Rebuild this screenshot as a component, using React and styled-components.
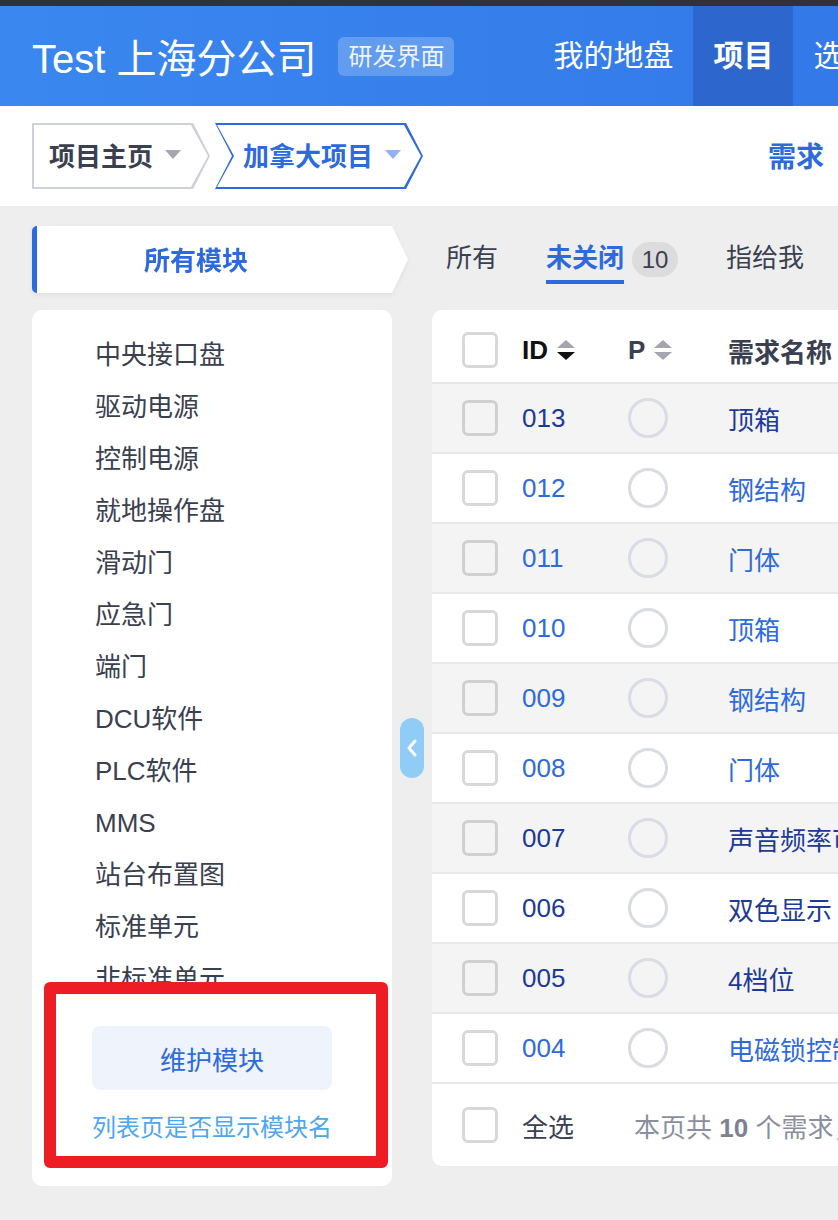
import React from 'react';
import styled, { createGlobalStyle } from 'styled-components';

const FONT = `"Liberation Sans", "Noto Sans CJK SC", sans-serif`;
const BLUE = '#2d6ade';
const NAVY = '#1c3a96';
const TEXT = '#3a4050';

const GlobalStyle = createGlobalStyle`
  html, body { margin: 0; padding: 0; background: #eeeeee; overflow: hidden; }
  body { font-family: ${FONT}; color: ${TEXT}; }
  * { box-sizing: border-box; }
`;

const Page = styled.div`
  width: 1100px;
  min-height: 1220px;
  background: #eeeeee;
`;

const TopStrip = styled.div`
  height: 6px;
  background: #2f3236;
`;

const Header = styled.header`
  height: 100px;
  display: flex;
  align-items: center;
  padding-left: 32px;
  background: linear-gradient(90deg, #3a87ef 0%, #3175e5 100%);
`;

const Brand = styled.div`
  font-size: 40px;
  color: #fff;
  white-space: nowrap;
  flex-shrink: 0;
`;

const EnvBadge = styled.span`
  margin-left: 22px;
  height: 39px;
  line-height: 39px;
  padding: 0 10px;
  border-radius: 6px;
  background: rgba(255, 255, 255, 0.22);
  color: rgba(255, 255, 255, 0.92);
  font-size: 24px;
  flex-shrink: 0;
`;

const MainNav = styled.nav`
  margin-left: 79px;
  display: flex;
  height: 100px;
  flex-shrink: 0;
`;

const NavItem = styled.a`
  padding: 0 20px;
  line-height: 100px;
  font-size: 30px;
  color: #fff;
  white-space: nowrap;
  font-weight: ${(p) => (p.$active ? 700 : 400)};
  background: ${(p) => (p.$active ? '#2d67ce' : 'transparent')};
`;

const SubBar = styled.div`
  height: 100px;
  background: #fff;
  display: flex;
  align-items: center;
  padding-left: 32px;
`;

const crumbShape = (notch) =>
  notch
    ? 'polygon(0 0, calc(100% - 17px) 0, 100% 50%, calc(100% - 17px) 100%, 0 100%, 17px 50%)'
    : 'polygon(0 0, calc(100% - 17px) 0, 100% 50%, calc(100% - 17px) 100%, 0 100%)';

const Crumb = styled.div`
  flex-shrink: 0;
  width: ${(p) => p.$width}px;
  height: 66px;
  padding: 2px;
  margin-left: ${(p) => (p.$notch ? 5 : 0)}px;
  background: ${(p) => (p.$active ? BLUE : '#cdd0d8')};
  clip-path: ${(p) => crumbShape(p.$notch)};
`;

const CrumbInner = styled.div`
  height: 100%;
  background: #fff;
  clip-path: ${(p) => crumbShape(p.$notch)};
  display: flex;
  align-items: center;
  padding-left: ${(p) => (p.$notch ? 26 : 15)}px;
  padding-bottom: 3px;
  font-size: 26px;
  font-weight: 700;
  color: ${(p) => (p.$active ? BLUE : TEXT)};
  white-space: nowrap;
`;

const Caret = styled.span`
  margin-left: 12px;
  width: 0;
  height: 0;
  border-left: 8px solid transparent;
  border-right: 8px solid transparent;
  border-top: 9px solid ${(p) => (p.$active ? '#93b2ee' : '#a4a7b0')};
`;

const SubNavItem = styled.a`
  margin-left: 345px;
  font-size: 28px;
  font-weight: 700;
  color: ${BLUE};
  white-space: nowrap;
  padding-bottom: 3px;
`;

const Main = styled.main`
  padding: 20px 0 0 32px;
`;

const TopRow = styled.div`
  display: flex;
  height: 67px;
  margin-bottom: 17px;
`;

const ModuleTabWrap = styled.div`
  flex-shrink: 0;
  filter: drop-shadow(0 2px 2px rgba(0, 0, 0, 0.06));
`;

const ModuleTab = styled.div`
  width: 376px;
  height: 67px;
  background: #fff;
  border-left: 5px solid ${BLUE};
  border-radius: 5px 0 0 5px;
  clip-path: polygon(0 0, calc(100% - 16px) 0, 100% 50%, calc(100% - 16px) 100%, 0 100%);
  display: flex;
  align-items: center;
  justify-content: center;
  padding-right: 53px;
  padding-bottom: 2px;
  font-size: 26px;
  font-weight: 700;
  color: ${BLUE};
`;

const Tabs = styled.div`
  margin-left: 38px;
  display: flex;
  align-items: flex-end;
  padding-bottom: 9px;
  gap: 48px;
`;

const Tab = styled.div`
  display: flex;
`;

const TabLabel = styled.span`
  font-size: 26px;
  line-height: 36px;
  padding-bottom: 4px;
  border-bottom: 4px solid ${(p) => (p.$active ? BLUE : 'transparent')};
  color: ${(p) => (p.$active ? BLUE : TEXT)};
  font-weight: ${(p) => (p.$active ? 600 : 400)};
  white-space: nowrap;
`;

const Count = styled.span`
  align-self: center;
  margin: 0 0 6px 8px;
  width: 46px;
  height: 35px;
  border-radius: 18px;
  background: #dcdcdc;
  font-size: 24px;
  line-height: 35px;
  text-align: center;
  color: ${TEXT};
`;

const ContentRow = styled.div`
  display: flex;
  align-items: flex-start;
`;

const Sidebar = styled.aside`
  flex-shrink: 0;
  width: 360px;
  height: 876px;
  background: #fff;
  border-radius: 10px;
  display: flex;
  flex-direction: column;
`;

const ModuleList = styled.ul`
  height: 672px;
  overflow: hidden;
  margin: 0;
  padding: 19px 0 0 63px;
  list-style: none;
`;

const ModuleItem = styled.li`
  font-size: 26px;
  line-height: 52px;
  color: ${TEXT};
  white-space: nowrap;
`;

const Highlight = styled.div`
  margin: 0 4px 18px 12px;
  border: 12px solid #ee1c25;
  border-radius: 6px;
  padding: 32px 36px 10px;
  background: #fff;
`;

const MaintainButton = styled.button`
  display: block;
  width: 240px;
  height: 64px;
  border: none;
  border-radius: 8px;
  background: #eef3fc;
  font-family: ${FONT};
  font-size: 26px;
  color: ${BLUE};
`;

const ToggleLink = styled.a`
  display: block;
  margin-top: 20px;
  font-size: 24px;
  line-height: 36px;
  color: #4ea6ef;
  white-space: nowrap;
`;

const Gutter = styled.div`
  flex-shrink: 0;
  width: 40px;
  height: 876px;
  display: flex;
  align-items: center;
  justify-content: center;
`;

const CollapseButton = styled.div`
  width: 24px;
  height: 60px;
  border-radius: 12px;
  background: #8fcdf7;
  display: flex;
  align-items: center;
  justify-content: center;
`;

const TableCard = styled.section`
  flex-shrink: 0;
  width: 700px;
  background: #fff;
  border-radius: 10px;
  overflow: hidden;
`;

const RowGrid = styled.div`
  display: grid;
  grid-template-columns: 60px 106px 100px 1fr;
  align-items: center;
  padding-left: 30px;
`;

const HeaderRow = styled(RowGrid)`
  height: 74px;
  padding-top: 8px;
  border-bottom: 2px solid #e6e6e6;
`;

const BodyRow = styled(RowGrid)`
  height: 70px;
  border-bottom: 2px solid #e8e8e8;
  background: ${(p) => (p.$striped ? '#f4f4f5' : '#fff')};
`;

const FooterRow = styled(RowGrid)`
  height: 82px;
`;

const Checkbox = styled.span`
  display: block;
  width: 36px;
  height: 36px;
  border: 3px solid ${(p) => (p.$striped ? '#d0d0d0' : '#d8d8d8')};
  border-radius: 6px;
`;

const HeadCell = styled.div`
  display: flex;
  align-items: center;
  gap: 8px;
  font-size: 26px;
  font-weight: 700;
  color: ${(p) => (p.$dark ? '#111' : TEXT)};
  white-space: nowrap;
`;

const IdCell = styled.a`
  font-size: 26px;
  color: ${(p) => (p.$visited ? NAVY : BLUE)};
`;

const PriorityDot = styled.span`
  display: block;
  width: 40px;
  height: 40px;
  border-radius: 50%;
  border: 3px solid #d9dce3;
`;

const NameCell = styled.a`
  font-size: 26px;
  color: ${(p) => (p.$visited ? NAVY : BLUE)};
  white-space: nowrap;
`;

const SelectAll = styled.span`
  font-size: 26px;
  color: ${TEXT};
`;

const Summary = styled.span`
  grid-column: 3 / 5;
  padding-left: 6px;
  font-size: 26px;
  color: #8a8f9e;
  white-space: nowrap;
  b { color: #7d8291; }
`;

const SortIcon = ({ active }) => (
  <svg width="20" height="24" viewBox="0 0 20 24">
    <polygon points="10,2 1,10 19,10" fill="#a3a6ae" />
    <polygon points="1,14 19,14 10,22" fill={active ? '#111' : '#a3a6ae'} />
  </svg>
);

const modules = [
  '中央接口盘', '驱动电源', '控制电源', '就地操作盘', '滑动门', '应急门', '端门',
  'DCU软件', 'PLC软件', 'MMS', '站台布置图', '标准单元', '非标准单元', '其他',
];

const stories = [
  { id: '013', name: '顶箱', visited: true },
  { id: '012', name: '钢结构' },
  { id: '011', name: '门体' },
  { id: '010', name: '顶箱' },
  { id: '009', name: '钢结构' },
  { id: '008', name: '门体' },
  { id: '007', name: '声音频率可调', visited: true },
  { id: '006', name: '双色显示', visited: true },
  { id: '005', name: '4档位', visited: true },
  { id: '004', name: '电磁锁控制' },
];

export default function App() {
  return (
    <Page>
      <GlobalStyle />
      <TopStrip />
      <Header>
        <Brand>Test 上海分公司</Brand>
        <EnvBadge>研发界面</EnvBadge>
        <MainNav>
          <NavItem>我的地盘</NavItem>
          <NavItem $active>项目</NavItem>
          <NavItem>选项</NavItem>
        </MainNav>
      </Header>
      <SubBar>
        <Crumb $width={178}>
          <CrumbInner>
            项目主页
            <Caret />
          </CrumbInner>
        </Crumb>
        <Crumb $width={208} $notch $active>
          <CrumbInner $notch $active>
            加拿大项目
            <Caret $active />
          </CrumbInner>
        </Crumb>
        <SubNavItem>需求</SubNavItem>
      </SubBar>
      <Main>
        <TopRow>
          <ModuleTabWrap>
            <ModuleTab>所有模块</ModuleTab>
          </ModuleTabWrap>
          <Tabs>
            <Tab>
              <TabLabel>所有</TabLabel>
            </Tab>
            <Tab>
              <TabLabel $active>未关闭</TabLabel>
              <Count>10</Count>
            </Tab>
            <Tab>
              <TabLabel>指给我</TabLabel>
            </Tab>
          </Tabs>
        </TopRow>
        <ContentRow>
          <Sidebar>
            <ModuleList>
              {modules.map((m) => (
                <ModuleItem key={m}>{m}</ModuleItem>
              ))}
            </ModuleList>
            <Highlight>
              <MaintainButton>维护模块</MaintainButton>
              <ToggleLink>列表页是否显示模块名</ToggleLink>
            </Highlight>
          </Sidebar>
          <Gutter>
            <CollapseButton>
              <svg width="12" height="20" viewBox="0 0 12 20">
                <polyline points="9,3 3,10 9,17" fill="none" stroke="#fff" strokeWidth="3" strokeLinecap="round" strokeLinejoin="round" />
              </svg>
            </CollapseButton>
          </Gutter>
          <TableCard>
            <HeaderRow>
              <Checkbox />
              <HeadCell $dark>
                ID <SortIcon active />
              </HeadCell>
              <HeadCell>
                P <SortIcon />
              </HeadCell>
              <HeadCell>需求名称</HeadCell>
            </HeaderRow>
            {stories.map((s, i) => (
              <BodyRow key={s.id} $striped={i % 2 === 0}>
                <Checkbox $striped={i % 2 === 0} />
                <IdCell $visited={s.visited}>{s.id}</IdCell>
                <PriorityDot />
                <NameCell $visited={s.visited}>{s.name}</NameCell>
              </BodyRow>
            ))}
            <FooterRow>
              <Checkbox />
              <SelectAll>全选</SelectAll>
              <Summary>
                本页共 <b>10</b> 个需求，共 <b>13</b> 个需求
              </Summary>
            </FooterRow>
          </TableCard>
        </ContentRow>
      </Main>
    </Page>
  );
}
